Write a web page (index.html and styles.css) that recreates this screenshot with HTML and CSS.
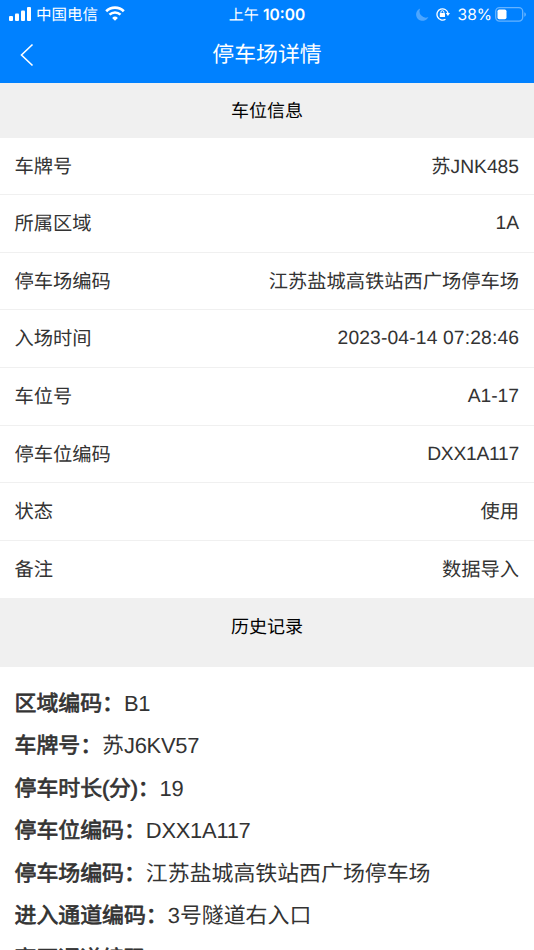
FILE: index.html
```html
<!DOCTYPE html>
<html lang="zh-CN">

<head>
    <meta charset="UTF-8">
    <meta name="viewport" content="width=device-width, initial-scale=1.0">
    <title>停车场详情</title>
    <link rel="stylesheet" href="styles.css">
</head>

<body>

    <header class="header">
        <div class="status-bar">
            <div class="status-left">
                <svg class="signal" width="23" height="14" viewBox="0 0 23 14" fill="#fff">
                    <rect x="0" y="9" width="4" height="5" rx="1"/>
                    <rect x="6" y="6.5" width="4" height="7.5" rx="1"/>
                    <rect x="12" y="3.5" width="4" height="10.5" rx="1"/>
                    <rect x="18" y="0" width="4" height="14" rx="1"/>
                </svg>
                <span class="carrier">中国电信</span>
                <svg class="wifi" width="20" height="15" viewBox="0 0 20 15">
                    <path d="M1.2 5.2a12.6 12.6 0 0 1 17.6 0" fill="none" stroke="#fff" stroke-width="2.7"/>
                    <path d="M4.5 8.7a7.9 7.9 0 0 1 11 0" fill="none" stroke="#fff" stroke-width="2.5"/>
                    <path d="M10 14.8l-2.9-2.9a4.2 4.2 0 0 1 5.8 0z" fill="#fff"/>
                </svg>
            </div>
            <span class="time">上午 <b>10:00</b></span>
            <div class="status-right">
                <svg class="moon" width="13" height="13" viewBox="0 0 13 13">
                    <path d="M4.2.5A6.4 6.4 0 1 0 12.4 9 6.3 6.3 0 0 1 4.2.5z" fill="#4da6ff"/>
                </svg>
                <svg class="lock" width="14" height="14" viewBox="0 0 14 14">
                    <path d="M9.5 12.2A5.6 5.6 0 1 1 12 6" fill="none" stroke="#fff" stroke-width="1.3"/>
                    <path d="M9.8 6h4.2l-2.1 3z" fill="#fff"/>
                    <rect x="3.8" y="6.1" width="5.2" height="4" rx=".6" fill="#fff"/>
                    <path d="M4.9 6.4V5.2a1.5 1.5 0 0 1 3 0v1.2" fill="none" stroke="#fff" stroke-width="1"/>
                </svg>
                <span class="percent">38%</span>
                <svg class="battery" width="32" height="15" viewBox="0 0 32 15">
                    <rect x=".7" y=".7" width="27" height="13.4" rx="3.8" fill="none" stroke="#66b3ff" stroke-width="1.3"/>
                    <rect x="2.5" y="2.5" width="9" height="9.8" rx="1.8" fill="#fff"/>
                    <path d="M29.3 5.2q1.6.5 1.6 2.2t-1.6 2.3z" fill="#66b3ff"/>
                </svg>
            </div>
        </div>
        <div class="nav-bar">
            <svg class="back" width="14" height="24" viewBox="0 0 14 24">
                <path d="M12.5 1.5L1.5 12l11 10.5" fill="none" stroke="#fff" stroke-width="1.6"/>
            </svg>
            <h1>停车场详情</h1>
        </div>
    </header>

    <h2 class="section-title">车位信息</h2>
    <ul class="info-list">
        <li><span>车牌号</span><span>苏JNK485</span></li>
        <li><span>所属区域</span><span class="latin">1A</span></li>
        <li><span>停车场编码</span><span>江苏盐城高铁站西广场停车场</span></li>
        <li><span>入场时间</span><span class="latin date">2023-04-14 07:28:46</span></li>
        <li><span>车位号</span><span class="latin">A1-17</span></li>
        <li><span>停车位编码</span><span class="latin code">DXX1A117</span></li>
        <li><span>状态</span><span>使用</span></li>
        <li><span>备注</span><span>数据导入</span></li>
    </ul>

    <h2 class="section-title history-title">历史记录</h2>
    <div class="history">
        <p><b>区域编码：</b><span class="code">B1</span></p>
        <p><b>车牌号：</b>苏<span class="code">J6KV57</span></p>
        <p><b>停车时长<span class="unit">(分)</span>：</b><span class="code">19</span></p>
        <p><b>停车位编码：</b><span class="code">DXX1A117</span></p>
        <p><b>停车场编码：</b>江苏盐城高铁站西广场停车场</p>
        <p><b>进入通道编码：</b>3号隧道右入口</p>
        <p><b>离开通道编码：</b></p>
    </div>

</body>

</html>
```
FILE: styles.css
```css
body {
    font-family: 'Liberation Sans', 'Noto Sans CJK SC', sans-serif;
    background-color: #fff;
    color: #333;
    margin: 0;
    height: 950px;
    overflow: hidden;
    text-rendering: geometricPrecision;
}

svg {
    display: block;
    flex-shrink: 0;
}

.header {
    height: 83px;
    background-color: #0081ff;
    color: #fff;
}

.status-bar {
    display: grid;
    grid-template-columns: 1fr auto 1fr;
    align-items: center;
    height: 28px;
    padding: 0 7px 0 9px;
    font-size: 15.5px;
    line-height: 28px;
}

.status-left,
.status-right {
    display: flex;
    align-items: center;
}

.status-right {
    justify-content: flex-end;
}

.signal {
    margin-bottom: 3px;
}

.carrier {
    margin-left: 4px;
    padding-top: 2px;
    line-height: 28px;
}

.wifi {
    margin-left: 7px;
    margin-bottom: 4px;
}

.time {
    margin-right: 2px;
    font-family: Inter, 'Noto Sans CJK SC', sans-serif;
    font-size: 15px;
    line-height: 28px;
    white-space: nowrap;
}

.time b {
    font-weight: 600;
    font-size: 15.5px;
}

.lock {
    margin-left: 7px;
}

.percent {
    margin-left: 8px;
    font-family: Inter, sans-serif;
    font-size: 15.5px;
}

.moon,
.lock,
.battery {
    margin-bottom: 2px;
}

.battery {
    margin-left: 3px;
}

.nav-bar {
    display: grid;
    grid-template-columns: 40px 1fr 40px;
    align-items: center;
    height: 54px;
    padding: 0 20px;
}

.nav-bar h1 {
    margin: 0;
    font-size: 21.9px;
    font-weight: normal;
    line-height: 54px;
    text-align: center;
}

.section-title {
    height: 54.5px;
    margin: 0;
    background-color: #f0f0f0;
    color: #000;
    font-size: 18px;
    font-weight: normal;
    line-height: 56px;
    text-align: center;
}

.history-title {
    height: 68px;
}

.info-list {
    list-style: none;
    margin: 0;
    padding: 0;
}

.info-list li {
    display: flex;
    justify-content: space-between;
    align-items: flex-start;
    box-sizing: border-box;
    height: 57.63px;
    padding: 0 15px 0 14.5px;
    border-bottom: 1px solid #f0f0f0;
    font-size: 19.25px;
    line-height: 60px;
}

.info-list .latin {
    line-height: 57px;
}

.info-list .date {
    letter-spacing: 0.15px;
    margin-right: -0.15px;
}

.code {
    letter-spacing: -0.25px;
}

.history {
    padding: 16px 14.5px 0;
    font-size: 21.9px;
    line-height: 42.6px;
}

.history p {
    height: 42.6px;
    margin: 0;
    white-space: nowrap;
}

/* semi-bold labels */
.history b {
    font-weight: normal;
    -webkit-text-stroke: 0.7px #333;
}

.history .unit {
    letter-spacing: -0.3px;
}
```
